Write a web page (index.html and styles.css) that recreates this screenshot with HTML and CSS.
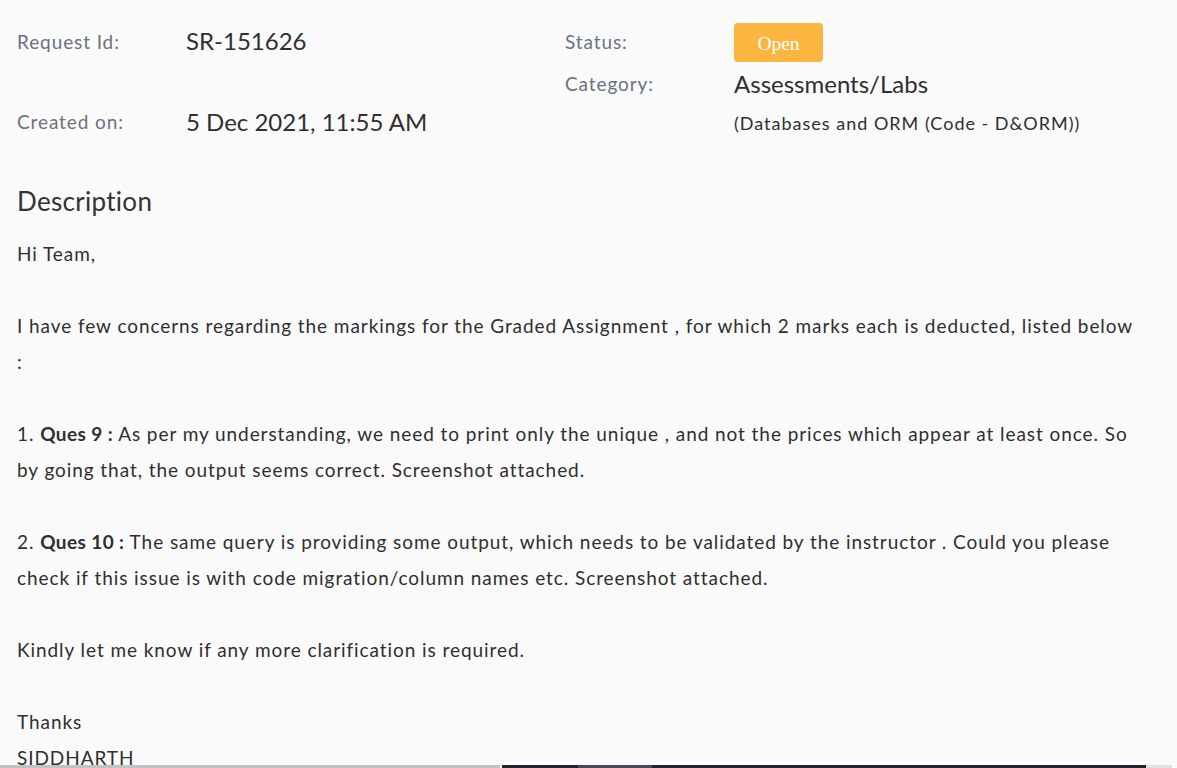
FILE: index.html
```html
<!DOCTYPE html>
<html lang="en">
<head>
<meta charset="utf-8">
<title>SR-151626</title>
<link rel="stylesheet" href="styles.css">
</head>
<body>
<main class="page">
  <section class="meta">
    <div class="label r1 c1">Request Id:</div>
    <div class="value r1 c2">SR-151626</div>
    <div class="label r1 c3">Status:</div>
    <div class="r1 c4"><span class="badge">Open</span></div>
    <div class="label r2 c3">Category:</div>
    <div class="value r2 c4">Assessments/Labs</div>
    <div class="label r3 c1">Created on:</div>
    <div class="value r3 c2">5 Dec 2021, 11:55 AM</div>
    <div class="sub r3 c4">(Databases and ORM (Code - D&amp;ORM))</div>
  </section>
  <h2 class="heading">Description</h2>
  <div class="body">
    Hi Team,<br><br>
    I have few concerns regarding the markings for the Graded Assignment , for which 2 marks each is deducted, listed below :<br><br>
    1. <b>Ques 9 :</b> As per my understanding, we need to print only the unique , and not the prices which appear at least once. So by going that, the output seems correct. Screenshot attached.<br><br>
    2. <b>Ques 10 :</b> The same query is providing some output, which needs to be validated by the instructor . Could you please check if this issue is with code migration/column names etc. Screenshot attached.<br><br>
    Kindly let me know if any more clarification is required.<br><br>
    Thanks<br>
    SIDDHARTH
  </div>
</main>
<div class="bottom-strip">
  <div class="strip-gray"></div>
  <div class="strip-dark"><div class="strip-thumb"></div></div>
  <div class="strip-end"></div>
</div>
</body>
</html>
```

FILE: styles.css
```css
html, body {
  margin: 0;
  padding: 0;
  background: #fafafa;
  overflow: hidden;
}
body {
  font-family: Lato, "Open Sans", sans-serif;
  color: #333333;
}
.page {
  padding: 23px 17px 0 17px;
}
.meta {
  display: grid;
  grid-template-columns: 169px 379px 169px 1fr;
  grid-template-rows: 39px 30px 30px;
  row-gap: 8px;
  align-items: center;
}
.r1 { grid-row: 1; }
.r2 { grid-row: 2; }
.r3 { grid-row: 3; }
.c1 { grid-column: 1; }
.c2 { grid-column: 2; }
.c3 { grid-column: 3; }
.c4 { grid-column: 4; }
.label {
  font-size: 19px;
  letter-spacing: 0.9px;
  color: #6b7280;
  margin-top: -3px;
}
.value {
  font-size: 24px;
  color: #2f2f2f;
  margin-top: -4px;
}
.sub {
  font-size: 18px;
  letter-spacing: 1px;
  color: #2f2f2f;
}
.badge {
  display: inline-flex;
  align-items: center;
  justify-content: center;
  box-sizing: border-box;
  padding-top: 3px;
  width: 89px;
  height: 39px;
  background: #fbb540;
  border-radius: 4px;
  color: #ffffff;
  font-family: "Liberation Serif", serif;
  font-size: 19.5px;
}
.heading {
  margin: 48px 0 20px 0;
  font-size: 26px;
  letter-spacing: 0.3px;
  line-height: 30px;
  font-weight: 400;
  color: #333333;
}
.body {
  font-size: 19px;
  letter-spacing: 0.93px;
  line-height: 36px;
  color: #2f2f2f;
  padding-right: 24px;
}
.body b {
  font-weight: 700;
  letter-spacing: 0.4px;
}
.bottom-strip {
  position: fixed;
  left: 0;
  right: 0;
  bottom: 0;
  height: 3px;
  display: flex;
}
.strip-gray {
  width: 500px;
  background: #c2c2c2;
}
.strip-dark {
  margin-left: 2px;
  width: 644px;
  background: #1f2630;
  position: relative;
}
.strip-thumb {
  position: absolute;
  left: 76px;
  top: 0;
  width: 74px;
  height: 3px;
  background: #454b55;
}
.strip-end {
  width: 26px;
  background: #e2e2e2;
}
```
